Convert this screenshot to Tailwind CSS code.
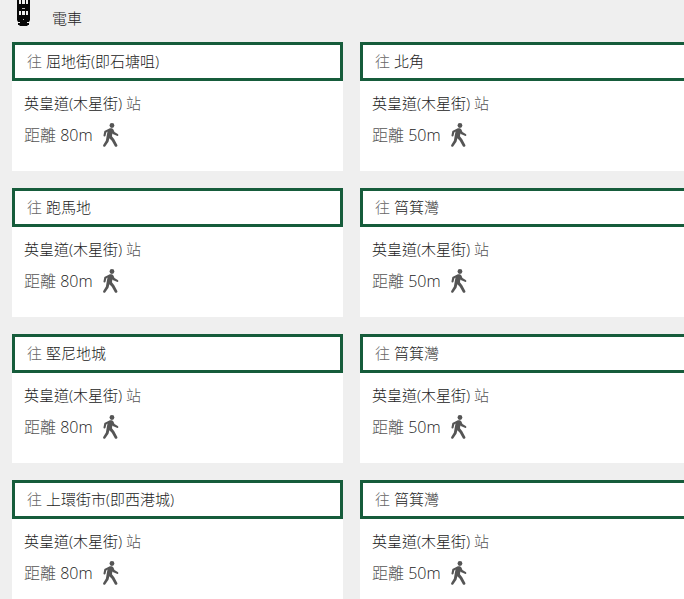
<!DOCTYPE html>
<html lang="zh-Hant-HK">

<head>
    <meta charset="UTF-8">
    <meta name="viewport" content="width=device-width, initial-scale=1.0">
    <title>電車</title>
    <script src="https://cdn.jsdelivr.net/npm/@tailwindcss/browser@4"></script>
</head>

<body class="min-h-screen overflow-hidden bg-[#efefef] font-['Open_Sans','Noto_Sans_CJK_TC',sans-serif] font-light text-[#222]">
    <svg class="hidden">
        <symbol id="walk" viewBox="0 0 16 25">
            <circle cx="9" cy="2.6" r="2.5"/>
            <path d="M5.800 5.900C7.300 5.200 9.600 5.200 10.500 6.800l1.100 2.600 3.400 2c1.300.8.400 2.500-.9 2l-4.200-2-.4-.7-.5 3.100 2.400 3.200 3.200 6c.6 1.500-1.700 2.500-2.600 1.100L8.800 18.500l-2.500-2.500-.9 3.500-3.300 4.800c-1 1.300-2.900 0-2.200-1.400l2.800-4.800 1.200-6.900.5-2.400-1.300 1-.8 3.400c-.4 1.400-2.300.9-2.100-.5l.9-4.300z"/>
        </symbol>
    </svg>

    <header class="flex h-[42px] items-start pl-4">
        <svg class="h-7 w-4" viewBox="0 0 16 28" aria-hidden="true">
            <path fill="#080808" d="M1 0h13v20l-1 2h-2v1h2v2h-1l-1 1H4l-1-1H2v-2h2v-1H2l-1-2z"/>
            <path fill="#efefef" d="M3 0h2v4H3zM6 0h3v4H6zM10 0h2v4h-2zM3 11h2v4H3zM6 11h3v4H6zM10 11h2v4h-2z"/>
            <path fill="#bbb" d="M6 8h3v1H6zM7 19h1v1H7z"/>
        </svg>
        <h1 class="ml-5 mt-1.5 text-[15px] leading-6">電車</h1>
    </header>

    <main id="stops" class="-mr-[7px] grid grid-cols-2 gap-[17px] pl-3"></main>

    <template id="card">
        <article class="h-[129px] bg-white">
            <h2 class="flex h-[39px] items-center border-3 border-[#165c3b] px-3 pb-0.5 text-[15px] leading-6">
                <span class="text-[#666]">往&nbsp;</span><span data-dest></span>
            </h2>
            <div class="px-3 pt-2.5">
                <p class="text-[15px] leading-6">英皇道(木星街) <span class="text-[#555]">站</span></p>
                <p class="mt-1.5 flex items-center text-base leading-7">
                    <span class="text-[#555]">距離&nbsp;</span><span data-distance></span>
                    <svg class="ml-2.5 h-6 w-4 fill-[#555]" role="img" aria-label="步行"><use href="#walk"/></svg>
                </p>
            </div>
        </article>
    </template>

    <script>
        const stops = [
            ['屈地街(即石塘咀)', '80m'],
            ['北角', '50m'],
            ['跑馬地', '80m'],
            ['筲箕灣', '50m'],
            ['堅尼地城', '80m'],
            ['筲箕灣', '50m'],
            ['上環街市(即西港城)', '80m'],
            ['筲箕灣', '50m'],
        ];
        const list = document.getElementById('stops');
        const template = document.getElementById('card');

        stops.forEach(([dest, distance]) => {
            const card = template.content.cloneNode(true);
            card.querySelector('[data-dest]').textContent = dest;
            card.querySelector('[data-distance]').textContent = distance;
            list.appendChild(card);
        });
    </script>
</body>

</html>
